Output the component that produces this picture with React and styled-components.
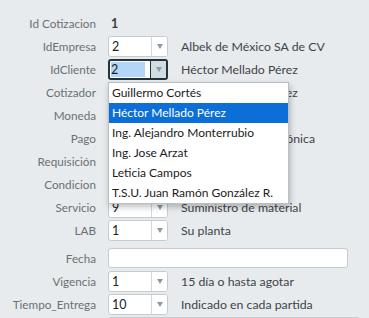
import React from 'react';
import styled, { createGlobalStyle } from 'styled-components';

const GlobalStyle = createGlobalStyle`
  html, body {
    margin: 0;
    padding: 0;
    background: #e7ebee;
    font-family: 'Lato', 'Open Sans', sans-serif;
    overflow: hidden;
  }
`;

const Form = styled.div`
  width: 369px;
  height: 318px;
  padding-top: 12px;
  box-sizing: border-box;
  display: flex;
  flex-direction: column;
  gap: 1px;
`;

const Row = styled.div`
  display: grid;
  grid-template-columns: 96px 1fr;
  column-gap: 12px;
  align-items: center;
  height: 22px;
  margin-top: ${p => (p.$spaced ? '5px' : '0')};
`;

const Label = styled.div`
  text-align: right;
  font-size: 11.7px;
  color: #6b7073;
  white-space: nowrap;
`;

const Field = styled.div`
  display: flex;
  align-items: center;
  gap: 13px;
  position: relative;
  height: 22px;
`;

const Value = styled.span`
  font-size: 12.5px;
  font-weight: 700;
  color: #3a3d3f;
  padding-left: 3px;
`;

const Desc = styled.span`
  font-size: 12.3px;
  color: #3f4346;
  white-space: nowrap;
`;

const SelectBox = styled.div`
  position: relative;
  width: 60px;
  height: 21px;
  box-sizing: border-box;
  display: flex;
  background: #fff;
  border: ${p => (p.$focused ? '2px solid #22333b' : '1px solid #c5cbcf')};
  border-radius: 3px;
  flex-shrink: 0;
`;

const SelectText = styled.div`
  flex: 1;
  display: flex;
  align-items: center;
  padding-left: ${p => (p.$focused ? '1px' : '3px')};
  font-size: 12.5px;
  color: #222;
`;

const Highlight = styled.span`
  display: block;
  width: 100%;
  height: 15px;
  line-height: 15px;
  background: #b3d5f8;
  margin-right: 5px;
`;

const Arrow = styled.div`
  width: 15px;
  display: flex;
  align-items: center;
  justify-content: center;
  border-left: 1px solid ${p => (p.$focused ? '#22333b' : '#d3d8db')};
  background: ${p => (p.$focused ? '#cfdde1' : '#fff')};
  border-radius: 0 2px 2px 0;

  &::after {
    content: '';
    border-left: 3.5px solid transparent;
    border-right: 3.5px solid transparent;
    border-top: 5px solid #8b9aa2;
  }
`;

const TextInput = styled.div`
  width: ${p => p.$width || 240}px;
  height: 20px;
  box-sizing: border-box;
  background: #fff;
  border: 1px solid #c5cbcf;
  border-radius: 3px;
`;

const Menu = styled.ul`
  position: absolute;
  top: 21px;
  left: -2px;
  width: 181px;
  box-sizing: border-box;
  margin: 0;
  padding: 0;
  list-style: none;
  background: #fff;
  border: 1px solid #b9bfc3;
  box-shadow: 1px 3px 6px rgba(0, 0, 0, 0.25);
  z-index: 10;
`;

const MenuItem = styled.li`
  height: 20px;
  line-height: 20px;
  padding-left: 3px;
  font-size: 12px;
  white-space: nowrap;
  color: ${p => (p.$active ? '#fff' : '#1b1b1b')};
  background: ${p => (p.$active ? '#0c6fd7' : 'transparent')};
`;

const Select = ({ value, focused, children }) => (
  <SelectBox $focused={focused}>
    <SelectText $focused={focused}>
      {focused ? <Highlight>{value}</Highlight> : value}
    </SelectText>
    <Arrow $focused={focused} />
    {children}
  </SelectBox>
);

const clientes = [
  'Guillermo Cortés',
  'Héctor Mellado Pérez',
  'Ing. Alejandro Monterrubio',
  'Ing. Jose Arzat',
  'Leticia Campos',
  'T.S.U. Juan Ramón González R.',
];

export default function App() {
  return (
    <>
      <GlobalStyle />
      <Form>
        <Row>
          <Label>Id Cotizacion</Label>
          <Field><Value>1</Value></Field>
        </Row>
        <Row>
          <Label>IdEmpresa</Label>
          <Field>
            <Select value="2" />
            <Desc>Albek de México SA de CV</Desc>
          </Field>
        </Row>
        <Row>
          <Label>IdCliente</Label>
          <Field>
            <Select value="2" focused>
              <Menu>
                {clientes.map(c => (
                  <MenuItem key={c} $active={c === 'Héctor Mellado Pérez'}>{c}</MenuItem>
                ))}
              </Menu>
            </Select>
            <Desc>Héctor Mellado Pérez</Desc>
          </Field>
        </Row>
        <Row>
          <Label>Cotizador</Label>
          <Field>
            <Select value="2" />
            <Desc>Héctor Mellado Pérez</Desc>
          </Field>
        </Row>
        <Row>
          <Label>Moneda</Label>
          <Field>
            <Select value="1" />
            <Desc>Pesos</Desc>
          </Field>
        </Row>
        <Row>
          <Label>Pago</Label>
          <Field>
            <Select value="3" />
            <Desc>Transferencia electrónica</Desc>
          </Field>
        </Row>
        <Row>
          <Label>Requisición</Label>
          <Field>
            <Select value="" />
          </Field>
        </Row>
        <Row>
          <Label>Condicion</Label>
          <Field>
            <Select value="1" />
            <Desc>Contado</Desc>
          </Field>
        </Row>
        <Row>
          <Label>Servicio</Label>
          <Field>
            <Select value="9" />
            <Desc>Suministro de material</Desc>
          </Field>
        </Row>
        <Row>
          <Label>LAB</Label>
          <Field>
            <Select value="1" />
            <Desc>Su planta</Desc>
          </Field>
        </Row>
        <Row $spaced>
          <Label>Fecha</Label>
          <Field>
            <TextInput $width={240} />
          </Field>
        </Row>
        <Row>
          <Label>Vigencia</Label>
          <Field>
            <Select value="1" />
            <Desc>15 día o hasta agotar</Desc>
          </Field>
        </Row>
        <Row>
          <Label>Tiempo_Entrega</Label>
          <Field>
            <Select value="10" />
            <Desc>Indicado en cada partida</Desc>
          </Field>
        </Row>
        <Row>
          <Label></Label>
          <Field>
            <TextInput $width={252} />
          </Field>
        </Row>
      </Form>
    </>
  );
}
